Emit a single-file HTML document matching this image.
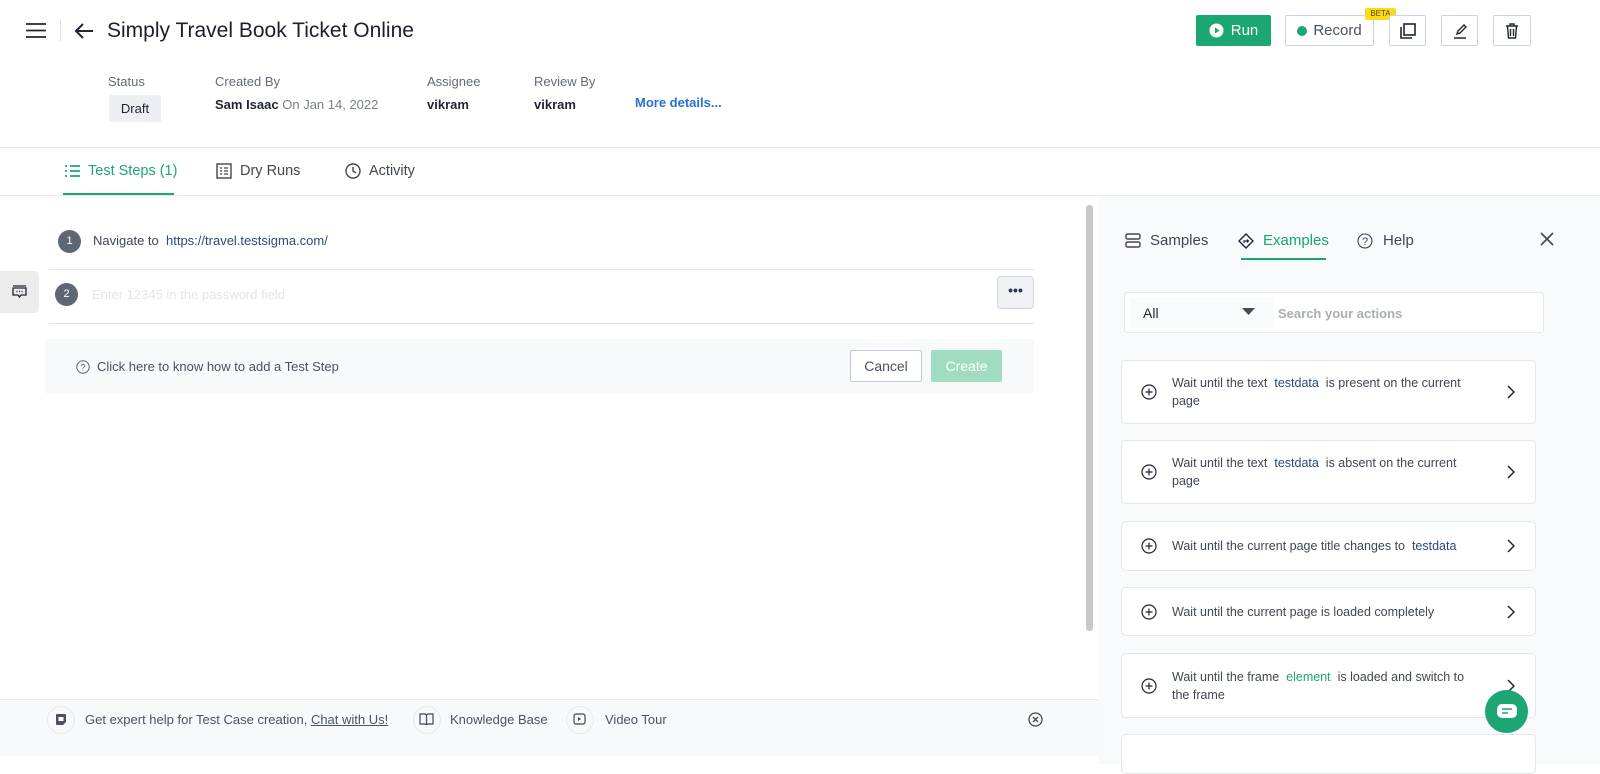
<!DOCTYPE html>
<html><head><meta charset="utf-8"><style>
*{box-sizing:border-box;margin:0;padding:0}
body{width:1600px;height:764px;overflow:hidden;background:#fff;font-family:"Liberation Sans",sans-serif;color:#1f2533;position:relative}
.a{position:absolute}
.lbl{font-size:13px;color:#636a78}
.val{font-size:13px;font-weight:bold;color:#1f2533}
.btn{position:absolute;border:1px solid #c9d4e0;border-radius:2px;background:#fff;display:flex;align-items:center;justify-content:center}
.card{position:absolute;left:1121px;width:415px;background:#fff;border:1px solid #e3e6ec;border-radius:5px;font-size:12.5px;color:#3f4656;line-height:18px}
.card .plus{position:absolute;left:19px;top:50%;margin-top:-8px}
.card .txt{position:absolute;left:50px;width:300px;top:50%;transform:translateY(-50%)}
.card .chev{position:absolute;right:20px;top:50%;margin-top:-7px}
.td{color:#2b4a78}
</style></head><body>
<!-- header -->
<svg class="a" style="left:25px;top:22px" width="22" height="17"><path d="M1 2h20M1 8.5h20M1 15h20" stroke="#1f2533" stroke-width="1.8"/></svg>
<div class="a" style="left:60px;top:20px;width:1px;height:21px;background:#dde1e6"></div>
<svg class="a" style="left:74px;top:22px" width="20" height="18"><path d="M19 9H2M9 2L2 9l7 7" stroke="#1f2533" stroke-width="2" fill="none"/></svg>
<div class="a" style="left:107px;top:19px;font-size:21px;color:#1b1f2a">Simply Travel Book Ticket Online</div>

<div class="a" style="left:1196px;top:15px;width:75px;height:31px;background:#1ba672;border-radius:2px;color:#fff;font-size:15px;display:flex;align-items:center;justify-content:center;gap:7px"><svg width="15" height="15"><circle cx="7.5" cy="7.5" r="7" fill="#fff"/><path d="M6 4.5v6l4.5-3z" fill="#1ba672"/></svg>Run</div>
<div class="btn" style="left:1285px;top:15px;width:89px;height:31px;font-size:15px;color:#4a5262;gap:6px"><span style="width:10px;height:10px;border-radius:50%;background:#1ba672;display:inline-block"></span>Record</div>
<div class="a" style="left:1365px;top:8px;width:31px;height:12px;background:#fadb14;font-size:8px;color:#5a4a00;text-align:center;line-height:12px;border-radius:2px">BETA</div>
<div class="btn" style="left:1389px;top:15px;width:37px;height:31px"><svg width="16" height="16"><rect x="4" y="1" width="11" height="11" fill="none" stroke="#1f2533" stroke-width="1.6"/><path d="M1 4v11h11" fill="none" stroke="#1f2533" stroke-width="1.6"/></svg></div>
<div class="btn" style="left:1441px;top:15px;width:37px;height:31px"><svg width="16" height="16"><path d="M5 11l1-3 6-6 2 2-6 6zM2 15h12" fill="none" stroke="#1f2533" stroke-width="1.4"/></svg></div>
<div class="btn" style="left:1493px;top:15px;width:38px;height:31px"><svg width="14" height="16"><path d="M1 3h12M5 3V1h4v2M2.5 3l1 12h7l1-12M5.5 6v7M8.5 6v7" fill="none" stroke="#1f2533" stroke-width="1.4"/></svg></div>

<div class="a lbl" style="left:108px;top:74px">Status</div>
<div class="a" style="left:109px;top:95px;width:52px;height:27px;background:#eceef2;border-radius:2px;font-size:13px;color:#1f2533;display:flex;align-items:center;justify-content:center">Draft</div>
<div class="a lbl" style="left:215px;top:74px">Created By</div>
<div class="a" style="left:215px;top:97px;font-size:13px"><b>Sam Isaac</b> <span style="color:#7a808c">On Jan 14, 2022</span></div>
<div class="a lbl" style="left:427px;top:74px">Assignee</div>
<div class="a val" style="left:427px;top:97px">vikram</div>
<div class="a lbl" style="left:534px;top:74px">Review By</div>
<div class="a val" style="left:534px;top:97px">vikram</div>
<div class="a" style="left:635px;top:95px;font-size:13px;font-weight:bold;color:#2672d4">More details...</div>

<div class="a" style="left:0;top:147px;width:1600px;height:1px;background:#e6e9ec"></div>
<div class="a" style="left:0;top:195px;width:1600px;height:1px;background:#e6e9ec"></div>
<div class="a" style="left:64px;top:163px;font-size:14.5px;color:#1ba672;display:flex;align-items:center;gap:8px"><svg width="16" height="14"><path d="M1 2h2M1 7h2M1 12h2M6 2h10M6 7h10M6 12h10" stroke="#1ba672" stroke-width="1.8"/></svg>Test Steps (1)</div>
<div class="a" style="left:63px;top:193px;width:111px;height:2px;background:#1ba672"></div>
<div class="a" style="left:216px;top:163px;font-size:14.5px;color:#3f4656;display:flex;align-items:center;gap:8px"><svg width="16" height="16"><rect x="1" y="1" width="14" height="14" fill="none" stroke="#3f4656" stroke-width="1.4"/><path d="M4 5h2M4 8h2M4 11h2M8 5h4M8 8h4M8 11h4" stroke="#3f4656" stroke-width="1.3"/></svg>Dry Runs</div>
<div class="a" style="left:345px;top:163px;font-size:14.5px;color:#3f4656;display:flex;align-items:center;gap:8px"><svg width="16" height="16"><circle cx="8" cy="8" r="7" fill="none" stroke="#3f4656" stroke-width="1.4"/><path d="M8 4v4l3 2" fill="none" stroke="#3f4656" stroke-width="1.4"/></svg>Activity</div>

<!-- steps -->
<div class="a" style="left:58px;top:230px;width:23px;height:23px;border-radius:50%;background:#5f6674;color:#fff;font-size:11px;text-align:center;line-height:23px">1</div>
<div class="a" style="left:93px;top:233px;font-size:13px;color:#3f4656">Navigate to &nbsp;<span style="color:#2b4a78">https://travel.testsigma.com/</span></div>
<div class="a" style="left:49px;top:269px;width:985px;height:1px;background:#e6e9ec"></div>
<div class="a" style="left:0;top:271px;width:39px;height:42px;background:#ececec;border-radius:0 4px 4px 0"></div>
<svg class="a" style="left:12px;top:285px" width="15" height="14"><path d="M1 1h13M1 3h13v7H9l-1.5 2L6 10H1z" fill="none" stroke="#1f2533" stroke-width="1.3"/><path d="M4.5 6.5h1M7 6.5h1M9.5 6.5h1" stroke="#1f2533" stroke-width="1.4"/></svg>
<div class="a" style="left:55px;top:283px;width:23px;height:23px;border-radius:50%;background:#5f6674;color:#fff;font-size:11px;text-align:center;line-height:23px">2</div>
<div class="a" style="left:92px;top:287px;font-size:13px;color:#e3e5e9">Enter 12345 in the password field</div>
<div class="a" style="left:997px;top:276px;width:37px;height:33px;background:#eff1f5;border:1px solid #d3d9e2;border-radius:4px;font-size:14px;color:#2b3a55;text-align:center;line-height:26px;font-weight:bold">•••</div>
<div class="a" style="left:49px;top:323px;width:985px;height:1px;background:#dde1e6"></div>
<div class="a" style="left:45px;top:339px;width:989px;height:54px;background:#f8f9fb"></div>
<div class="a" style="left:76px;top:359px;font-size:13px;color:#4a5262;display:flex;align-items:center;gap:7px"><svg width="14" height="14"><circle cx="7" cy="7" r="6.2" fill="none" stroke="#5f6674" stroke-width="1"/><text x="7" y="10.5" font-size="9" text-anchor="middle" fill="#5f6674" font-family="Liberation Sans">?</text></svg>Click here to know how to add a Test Step</div>
<div class="btn" style="left:850px;top:350px;width:72px;height:32px;font-size:14px;color:#4a5262;border-color:#c3ccd6">Cancel</div>
<div class="a" style="left:931px;top:350px;width:71px;height:32px;background:#9fdcc2;border-radius:2px;font-size:14px;color:#fff;display:flex;align-items:center;justify-content:center">Create</div>

<div class="a" style="left:1086px;top:205px;width:7px;height:426px;background:#c8c8c8;border-radius:3px"></div>

<!-- footer -->
<div class="a" style="left:0;top:699px;width:1098px;height:57px;background:#f8f9fb;border-top:1px solid #e6e9ec"></div>
<div class="a" style="left:47px;top:706px;width:28px;height:28px;border-radius:50%;border:1px solid #e6e9ec;background:#f8f9fb"></div>
<svg class="a" style="left:55px;top:713px" width="12" height="13"><path d="M1 2a1 1 0 011-1h8a1 1 0 011 1v7l-3 3H2a1 1 0 01-1-1z" fill="#4a5262"/><rect x="3.5" y="4" width="5" height="4" fill="#fff"/></svg>
<div class="a" style="left:85px;top:712px;font-size:13px;color:#4a5262">Get expert help for Test Case creation, <u>Chat with Us!</u></div>
<div class="a" style="left:413px;top:706px;width:28px;height:28px;border-radius:50%;border:1px solid #e6e9ec"></div>
<svg class="a" style="left:419px;top:713px" width="15" height="12"><path d="M1 1h5l1.5 1L9 1h5v10H9l-1.5 1L6 11H1zM7.5 2v9" fill="none" stroke="#3f4656" stroke-width="1.2"/></svg>
<div class="a" style="left:450px;top:712px;font-size:13px;color:#4a5262">Knowledge Base</div>
<div class="a" style="left:566px;top:706px;width:28px;height:28px;border-radius:50%;border:1px solid #e6e9ec"></div>
<svg class="a" style="left:573px;top:713px" width="13" height="12"><rect x="1" y="1" width="11" height="10" rx="2" fill="none" stroke="#3f4656" stroke-width="1.2"/><path d="M5 4v4l3-2z" fill="#3f4656"/></svg>
<div class="a" style="left:605px;top:712px;font-size:13px;color:#4a5262">Video Tour</div>
<svg class="a" style="left:1028px;top:712px" width="15" height="15"><circle cx="7.5" cy="7.5" r="6.5" fill="none" stroke="#3f4656" stroke-width="1.3"/><path d="M5 5l5 5M10 5l-5 5" stroke="#3f4656" stroke-width="1.3"/></svg>

<!-- right panel -->
<div class="a" style="left:1098px;top:196px;width:502px;height:568px;background:#f9fafb"></div>
<div class="a" style="left:1125px;top:232px;font-size:15px;color:#3f4656;display:flex;align-items:center;gap:9px"><svg width="16" height="15"><rect x="1" y="1" width="14" height="5" rx="1.5" fill="none" stroke="#3f4656" stroke-width="1.4"/><rect x="1" y="9" width="14" height="5" rx="1.5" fill="none" stroke="#3f4656" stroke-width="1.4"/></svg>Samples</div>
<div class="a" style="left:1238px;top:232px;font-size:15px;color:#1ba672;display:flex;align-items:center;gap:9px"><svg width="16" height="16"><path d="M8 1l7 7-7 7-7-7z" fill="none" stroke="#1f2533" stroke-width="1.4"/><path d="M6 10V8h4M9 6.5L10.5 8 9 9.5" fill="none" stroke="#1f2533" stroke-width="1.2"/></svg>Examples</div>
<div class="a" style="left:1241px;top:258px;width:85px;height:2px;background:#1ba672"></div>
<div class="a" style="left:1357px;top:232px;font-size:15px;color:#3f4656;display:flex;align-items:center;gap:10px"><svg width="16" height="16"><circle cx="8" cy="8" r="7" fill="none" stroke="#3f4656" stroke-width="1.1"/><text x="8" y="12" font-size="11" text-anchor="middle" fill="#3f4656" font-family="Liberation Sans">?</text></svg>Help</div>
<svg class="a" style="left:1540px;top:232px" width="14" height="14"><path d="M1 1l12 12M13 1L1 13" stroke="#3f4656" stroke-width="1.6"/></svg>

<div class="a" style="left:1124px;top:292px;width:420px;height:41px;background:#fff;border:1px solid #e3e6ec;border-radius:3px"></div>
<div class="a" style="left:1130px;top:298px;width:143px;height:30px;background:#f9fafb"></div>
<div class="a" style="left:1143px;top:305px;font-size:14px;color:#1f2533">All</div>
<svg class="a" style="left:1242px;top:308px" width="13" height="8"><path d="M0 0h13L6.5 7z" fill="#4a4a4a"/></svg>
<div class="a" style="left:1278px;top:306px;font-size:13px;color:#a8adb6;font-weight:bold">Search your actions</div>

<svg width="0" height="0" style="position:absolute"><defs>
<symbol id="p" viewBox="0 0 16 16"><circle cx="8" cy="8" r="7" fill="none" stroke="#1f2533" stroke-width="1.2"/><path d="M8 4.5v7M4.5 8h7" stroke="#1f2533" stroke-width="1.2"/></symbol>
<symbol id="c" viewBox="0 0 8 14"><path d="M1 1l6 6-6 6" fill="none" stroke="#1f2533" stroke-width="1.5"/></symbol></defs></svg>

<div class="card" style="top:360px;height:64px"><svg class="plus" width="16" height="16"><use href="#p"/></svg><div class="txt">Wait until the text &nbsp;<span class="td">testdata</span>&nbsp; is present on the current page</div><svg class="chev" width="8" height="14"><use href="#c"/></svg></div>
<div class="card" style="top:440px;height:64px"><svg class="plus" width="16" height="16"><use href="#p"/></svg><div class="txt">Wait until the text &nbsp;<span class="td">testdata</span>&nbsp; is absent on the current page</div><svg class="chev" width="8" height="14"><use href="#c"/></svg></div>
<div class="card" style="top:521px;height:50px"><svg class="plus" width="16" height="16"><use href="#p"/></svg><div class="txt" style="width:340px">Wait until the current page title changes to &nbsp;<span class="td">testdata</span></div><svg class="chev" width="8" height="14"><use href="#c"/></svg></div>
<div class="card" style="top:587px;height:49px"><svg class="plus" width="16" height="16"><use href="#p"/></svg><div class="txt">Wait until the current page is loaded completely</div><svg class="chev" width="8" height="14"><use href="#c"/></svg></div>
<div class="card" style="top:653px;height:65px"><svg class="plus" width="16" height="16"><use href="#p"/></svg><div class="txt">Wait until the frame &nbsp;<span style="color:#1ba672">element</span>&nbsp; is loaded and switch to the frame</div><svg class="chev" width="8" height="14"><use href="#c"/></svg></div>
<div class="card" style="top:734px;height:40px"></div>

<div class="a" style="left:1485px;top:690px;width:43px;height:43px;border-radius:50%;background:#1ba672"></div>
<svg class="a" style="left:1496px;top:703px" width="22" height="16"><rect x="1" y="1" width="20" height="14" rx="5" fill="#fff"/><path d="M6 6h10M6 10h6" stroke="#1ba672" stroke-width="1.6"/></svg>
</body></html>
